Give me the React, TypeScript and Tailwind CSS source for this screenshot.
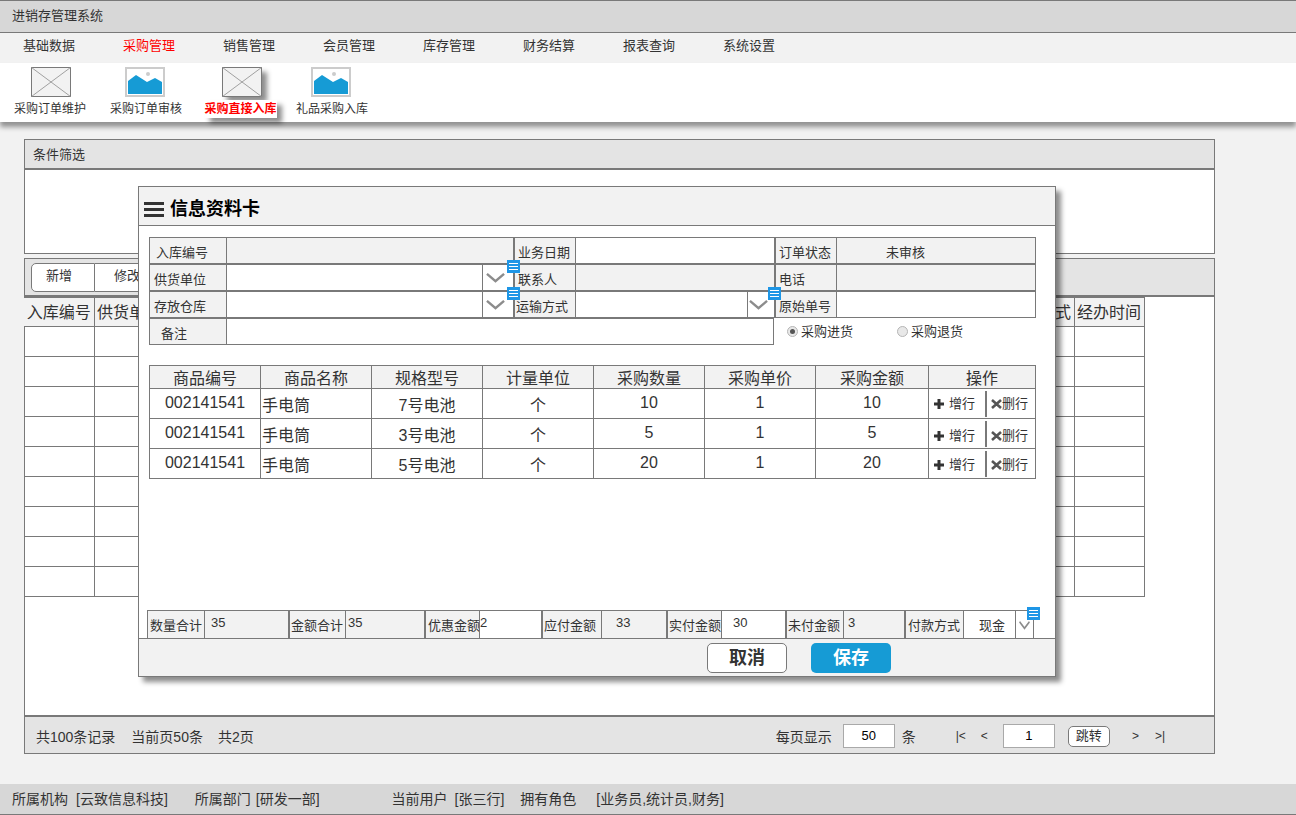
const FONT = 'font-["Liberation_Sans","Noto_Sans_CJK_SC",sans-serif]';

const NAV = ['基础数据', '采购管理', '销售管理', '会员管理', '库存管理', '财务结算', '报表查询', '系统设置'];
// the middle columns sit fully behind the dialog, so they carry no text
const LIST_HEADERS = ['入库编号', '供货单位', '', '', '', '', '', '', '', '', '', '', '', '', '付款方式', '经办时间'];
const ITEM_HEADERS = ['商品编号', '商品名称', '规格型号', '计量单位', '采购数量', '采购单价', '采购金额', '操作'];
const ITEMS = [
  { code: '002141541', name: '手电筒', spec: '7号电池', unit: '个', qty: '10', price: '1', amount: '10', actions: 'pt-[1px]' },
  { code: '002141541', name: '手电筒', spec: '3号电池', unit: '个', qty: '5', price: '1', amount: '5', actions: 'pt-[5px]' },
  { code: '002141541', name: '手电筒', spec: '5号电池', unit: '个', qty: '20', price: '1', amount: '20', actions: 'pt-[3px]' },
];

function Placeholder() {
  return (
    <svg width="40" height="30" viewBox="0 0 40 30" className="block">
      <rect x="0.5" y="0.5" width="39" height="29" fill="#f2f2f2" stroke="#797979" />
      <path d="M0.5 0.5L39.5 29.5M39.5 0.5L0.5 29.5" stroke="#a0a0a0" fill="none" />
    </svg>
  );
}

function ImageIcon() {
  return (
    <svg width="40" height="30" viewBox="0 0 40 30" className="block">
      <rect x="1" y="1" width="38" height="28" fill="#fff" stroke="#cccccc" strokeWidth="2" />
      <circle cx="23" cy="7" r="2" fill="#cccccc" />
      <path d="M3 14L11 8L22 15L30 11L37 15V27H3Z" fill="#169bd5" />
    </svg>
  );
}

function Chevron({ w = 20, h = 12 }: { w?: number; h?: number }) {
  return (
    <svg width={w} height={h} viewBox="0 0 20 12" preserveAspectRatio="none" className="block">
      <path d="M1 2L10 10L19 2" fill="none" stroke="#8c8c8c" strokeWidth="2.5" />
    </svg>
  );
}

// small blue note marker sitting over the dropdown cells
function NoteMark({ className }: { className: string }) {
  return (
    <div className={`absolute z-10 flex h-[13px] w-[13px] flex-col justify-center gap-[2px] bg-[#1e96e6] px-[2px] ${className}`}>
      <div className="h-px bg-white" />
      <div className="h-px bg-white" />
      <div className="h-px bg-white" />
    </div>
  );
}

function FormCell({ children, className = '' }: { children?: React.ReactNode; className?: string }) {
  return (
    <div className={`flex h-[27px] items-center border-y border-l border-[#797979] pt-[4px] text-[13px] text-[#333] ${className}`}>
      {children}
    </div>
  );
}

function SelectCell({ width }: { width: string }) {
  return (
    <div className="flex h-[27px] border-y border-l border-[#797979] bg-white">
      <div className={`ml-auto flex items-center justify-center border-l border-[#797979] pr-[5px] ${width}`}>
        <Chevron w={19} h={11} />
      </div>
    </div>
  );
}

function SumCell({ w, white, children, className = '' }: { w: string; white?: boolean; children?: React.ReactNode; className?: string }) {
  return (
    <div className={`flex h-full shrink-0 whitespace-nowrap border-l border-[#797979] text-[13px] text-[#333] ${w} ${white ? 'bg-white' : 'bg-[#f2f2f2]'} ${className}`}>
      {children}
    </div>
  );
}

function Radio({ checked }: { checked?: boolean }) {
  return (
    <span className="flex h-[11px] w-[11px] shrink-0 items-center justify-center rounded-full border border-[#b5b5b5] bg-[#e8e8e8]">
      {checked && <span className="h-[5px] w-[5px] rounded-full bg-[#555]" />}
    </span>
  );
}

function Modal() {
  return (
    <div className="absolute left-[138px] top-[186px] z-20 h-[491px] w-[918px] border border-[#797979] bg-white shadow-[5px_5px_5px_rgba(0,0,0,0.45)]">
      <div className="flex h-[39px] items-center border-b border-[#797979] bg-[#f2f2f2] pl-[5px] pt-[6px]">
        <div className="flex w-[20px] flex-col gap-[3px]">
          <div className="h-[3px] bg-[#333]" />
          <div className="h-[3px] bg-[#333]" />
          <div className="h-[3px] bg-[#333]" />
        </div>
        <span className="ml-[6px] text-[18px] font-bold text-black">信息资料卡</span>
      </div>

      <div className="relative ml-[10px] mt-[11px] grid w-[887px] grid-cols-[77px_287px_62px_199px_62px_200px]">
        <FormCell className="bg-[#f2f2f2] pl-[6px]">入库编号</FormCell>
        <FormCell className="bg-[#f2f2f2]" />
        <FormCell className="border-l-2 bg-[#f2f2f2] pl-[3px]">业务日期</FormCell>
        <FormCell className="bg-white" />
        <FormCell className="border-l-2 bg-[#f2f2f2] pl-[3px]">订单状态</FormCell>
        <FormCell className="border-r bg-[#f2f2f2] pl-[49px]">未审核</FormCell>

        <FormCell className="bg-[#f2f2f2] pl-[4px]">供货单位</FormCell>
        <SelectCell width="w-[31px]" />
        <FormCell className="border-l-2 bg-[#f2f2f2] pl-[3px]">联系人</FormCell>
        <FormCell className="bg-[#f2f2f2]" />
        <FormCell className="border-l-2 bg-[#f2f2f2] pl-[3px]">电话</FormCell>
        <FormCell className="border-r bg-[#f2f2f2]" />

        <FormCell className="bg-[#f2f2f2] pl-[4px]">存放仓库</FormCell>
        <SelectCell width="w-[31px]" />
        <FormCell className="border-l-2 bg-[#f2f2f2] pl-[1px]">运输方式</FormCell>
        <SelectCell width="w-[27px]" />
        <FormCell className="border-l-2 bg-[#f2f2f2] pl-[3px]">原始单号</FormCell>
        <FormCell className="border-r bg-white" />

        <FormCell className="bg-[#f2f2f2] pl-[11px]">备注</FormCell>
        <FormCell className="col-span-3 border-r bg-white" />
        <div className="col-span-2 flex h-[27px] items-center pl-[13px] text-[13px] text-[#333]">
          <Radio checked />
          <span className="ml-[3px] w-[96px]">采购进货</span>
          <Radio />
          <span className="ml-[3px]">采购退货</span>
        </div>

        <NoteMark className="left-[358px] top-[23px]" />
        <NoteMark className="left-[358px] top-[50px]" />
        <NoteMark className="left-[619px] top-[50px]" />
      </div>

      <table className="ml-[10px] mt-[20px] w-[886px] table-fixed border-collapse text-[16px] text-[#333]">
        <colgroup>
          <col className="w-[111px]" /><col className="w-[111px]" /><col className="w-[111px]" /><col className="w-[111px]" />
          <col className="w-[111px]" /><col className="w-[111px]" /><col className="w-[113px]" /><col className="w-[107px]" />
        </colgroup>
        <thead>
          <tr className="h-[23px] bg-[#f2f2f2]">
            {ITEM_HEADERS.map((h) => (
              <th key={h} className="border border-[#797979] p-0 pt-[3px] font-normal leading-[19px]">{h}</th>
            ))}
          </tr>
        </thead>
        <tbody>
          {ITEMS.map((it) => (
            <tr key={it.spec} className="h-[30px]">
              <td className="border border-[#797979] p-0 pb-[1px] text-center">{it.code}</td>
              <td className="border border-[#797979] p-0 pl-[1px] pt-[5px]">{it.name}</td>
              <td className="border border-[#797979] p-0 pt-[5px] text-center">{it.spec}</td>
              <td className="border border-[#797979] p-0 pt-[5px] text-center">{it.unit}</td>
              <td className="border border-[#797979] p-0 pb-[1px] text-center">{it.qty}</td>
              <td className="border border-[#797979] p-0 pb-[1px] text-center">{it.price}</td>
              <td className="border border-[#797979] p-0 pb-[1px] text-center">{it.amount}</td>
              <td className="border border-[#797979] p-0">
                <div className="flex h-[29px] items-center text-[13px]">
                  <span className={`flex w-[56px] items-center pl-[5px] ${it.actions}`}>
                    <svg width="10" height="10" viewBox="0 0 10 10" className="mr-[5px] shrink-0">
                      <path d="M5 0V10M0 5H10" stroke="#333" strokeWidth="3" />
                    </svg>
                    增行
                  </span>
                  <span className={`flex h-[26px] items-center border-l-2 border-[#797979] pl-[4px] ${it.actions}`}>
                    <svg width="11" height="10" viewBox="0 0 11 10" className="shrink-0">
                      <path d="M1 1L10 9M10 1L1 9" stroke="#555" strokeWidth="2.6" />
                    </svg>
                    删行
                  </span>
                </div>
              </td>
            </tr>
          ))}
        </tbody>
      </table>

      <div className="relative ml-[8px] mt-[131px] flex h-[28px] w-[888px] border-t border-[#797979]">
        <SumCell w="w-[57px]" className="items-center pl-[2px] pt-[2px]">数量合计</SumCell>
        <SumCell w="w-[84px]" className="pl-[6px] pt-[2px] text-[12px]">35</SumCell>
        <SumCell w="w-[57px]" className="items-center border-l-2 pl-[1px] pt-[2px]">金额合计</SumCell>
        <SumCell w="w-[79px]" className="pl-[2px] pt-[2px] text-[12px]">35</SumCell>
        <SumCell w="w-[55px]" className="items-center border-l-2 pl-[2px] pt-[2px]">优惠金额</SumCell>
        <SumCell w="w-[62px]" white className="pt-[2px] text-[13px]">2</SumCell>
        <SumCell w="w-[60px]" className="items-center border-l-2 pl-[1px] pt-[2px]">应付金额</SumCell>
        <SumCell w="w-[65px]" className="pl-[14px] pt-[2px] text-[12px]">33</SumCell>
        <SumCell w="w-[55px]" className="items-center border-l-2 pl-[1px] pt-[2px]">实付金额</SumCell>
        <SumCell w="w-[64px]" white className="pl-[11px] pt-[2px] text-[12px]">30</SumCell>
        <SumCell w="w-[58px]" className="items-center border-l-2 pl-[1px] pt-[2px]">未付金额</SumCell>
        <SumCell w="w-[61px]" className="pl-[4px] pt-[2px] text-[12px]">3</SumCell>
        <SumCell w="w-[59px]" className="items-center border-l-2 pl-[2px] pt-[2px]">付款方式</SumCell>
        <SumCell w="w-[52px]" white className="items-center pl-[15px] pt-[2px]">现金</SumCell>
        <SumCell w="w-[19px]" white className="items-start justify-center border-r pt-[9px]"><Chevron w={11} h={10} /></SumCell>
        <NoteMark className="left-[880px] top-[-4px]" />
      </div>

      <div className="flex h-[38px] gap-[24px] border-t border-[#797979] bg-[#f2f2f2] pl-[568px] pt-[4px]">
        <div className="flex h-[30px] w-[80px] items-center justify-center rounded-[5px] border border-[#797979] bg-white text-[18px] font-bold text-[#333]">取消</div>
        <div className="flex h-[30px] w-[80px] items-center justify-center rounded-[5px] bg-[#169bd5] text-[18px] font-bold text-white">保存</div>
      </div>
    </div>
  );
}

export default function App() {
  return (
    <div className={`relative flex h-[815px] w-[1296px] flex-col overflow-hidden bg-[#f2f2f2] ${FONT}`}>
      <header className="flex h-[33px] shrink-0 items-center border-y border-[#797979] bg-[#d7d7d7] pb-[2px] pl-[12px] text-[13px] text-[#333]">
        进销存管理系统
      </header>
      <nav className="flex h-[30px] shrink-0 items-center pl-[23px] pb-[4px] text-[13px] text-[#333]">
        {NAV.map((n) => (
          <span key={n} className={`w-[100px] ${n === '采购管理' ? 'text-[#ff0000]' : ''}`}>{n}</span>
        ))}
      </nav>

      <div className="relative z-10 flex h-[59px] shrink-0 bg-white text-[12px] text-[#333] shadow-[0_5px_5px_rgba(0,0,0,0.4)]">
        <div className="ml-[14px] flex w-[72px] flex-col items-center pt-[4px]">
          <div className="ml-[2px]"><Placeholder /></div>
          <span className="mt-[3px] whitespace-nowrap">采购订单维护</span>
        </div>
        <div className="ml-[24px] flex w-[72px] flex-col items-center pt-[4px]">
          <div className="mr-[2px]"><ImageIcon /></div>
          <span className="mt-[3px] whitespace-nowrap">采购订单审核</span>
        </div>
        <div className="ml-[23px] flex w-[73px] flex-col items-center pt-[4px]">
          <div className="shadow-[5px_5px_5px_rgba(0,0,0,0.45)]"><Placeholder /></div>
          <span className="mr-[2px] mt-[3px] whitespace-nowrap bg-white font-bold text-[#ff0000] shadow-[5px_5px_5px_rgba(0,0,0,0.45)]">采购直接入库</span>
        </div>
        <div className="ml-[18px] flex w-[72px] flex-col items-center pt-[4px]">
          <div className="mr-[2px]"><ImageIcon /></div>
          <span className="mt-[3px] whitespace-nowrap">礼品采购入库</span>
        </div>
      </div>

      <main className="flex flex-1 flex-col pl-[24px] pt-[17px]">
        <section className="h-[115px] w-[1191px] border border-[#797979] bg-white">
          <div className="flex h-[30px] items-center border-b-2 border-[#797979] bg-[#e4e4e4] pl-[8px] pt-[1px] text-[13px] text-[#333]">条件筛选</div>
        </section>

        <section className="mt-[4px] flex h-[496px] w-[1191px] flex-col border border-[#797979] bg-white">
          <div className="flex h-[38px] shrink-0 items-center border-b-2 border-[#797979] bg-[#e4e4e4] pl-[6px] text-[13px] text-[#333]">
            <div className="flex h-[29px] w-[64px] items-center rounded-l-[5px] border border-[#797979] bg-white pb-[2px] pl-[14px]">新增</div>
            <div className="flex h-[29px] w-[64px] items-center border-y border-r border-[#797979] bg-white pb-[2px] pl-[19px]">修改</div>
          </div>
          <table className="-ml-px w-[1120px] table-fixed border-collapse text-[#333]">
            <thead>
              <tr className="h-[29px] bg-[#f2f2f2] text-[16px]">
                {LIST_HEADERS.map((h, i) => (
                  <th key={i} className="w-[70px] overflow-hidden whitespace-nowrap border border-[#797979] p-0 pt-[2px] text-center font-normal leading-[24px] first:border-l-0">{h}</th>
                ))}
              </tr>
            </thead>
            <tbody>
              {Array.from({ length: 9 }).map((_, r) => (
                <tr key={r} className="h-[30px]">
                  {LIST_HEADERS.map((_h, i) => (
                    <td key={i} className="border border-[#797979] p-0 first:border-l-0" />
                  ))}
                </tr>
              ))}
            </tbody>
          </table>
          <div className="mt-auto flex h-[38px] shrink-0 items-center border-t-2 border-[#797979] bg-[#e4e4e4] pl-[11px] pt-[2px] text-[14px] text-[#333]">
            <span className="pt-[2px]">共100条记录</span>
            <span className="ml-[16px] pt-[2px]">当前页50条</span>
            <span className="ml-[15px] pt-[2px]">共2页</span>
            <span className="ml-[522px] pt-[2px]">每页显示</span>
            <div className="ml-[11px] flex h-[24px] w-[52px] items-center justify-center border border-[#a9a9a9] bg-white text-[13px] text-black">50</div>
            <span className="ml-[7px] pt-[2px]">条</span>
            <span className="ml-[40px] text-[12px]">|&lt;</span>
            <span className="ml-[15px] text-[12px]">&lt;</span>
            <div className="ml-[15px] flex h-[24px] w-[52px] items-center justify-center border border-[#a9a9a9] bg-white text-[13px] text-black">1</div>
            <div className="ml-[13px] flex h-[21px] w-[42px] items-center justify-center rounded-[5px] border border-[#797979] bg-white text-[13px]">跳转</div>
            <span className="ml-[22px] text-[12px]">&gt;</span>
            <span className="ml-[16px] text-[12px]">&gt;|</span>
          </div>
        </section>
      </main>

      <footer className="flex h-[31px] shrink-0 items-center border-b border-[#797979] bg-[#d7d7d7] pl-[12px] text-[14px] text-[#333]">
        <span>所属机构</span>
        <span className="ml-[8px]">[云致信息科技]</span>
        <span className="ml-[27px]">所属部门</span>
        <span className="ml-[5px]">[研发一部]</span>
        <span className="ml-[72px]">当前用户</span>
        <span className="ml-[7px]">[张三行]</span>
        <span className="ml-[16px]">拥有角色</span>
        <span className="ml-[20px]">[业务员,统计员,财务]</span>
      </footer>

      <Modal />
    </div>
  );
}
